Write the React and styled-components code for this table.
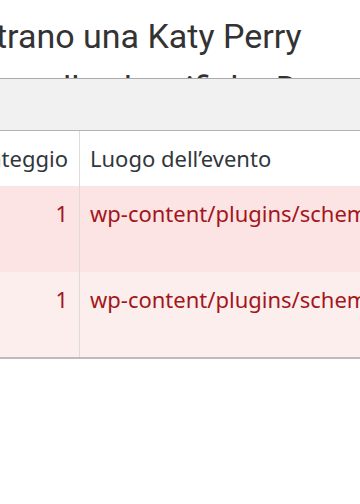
import React from "react";
import styled, { createGlobalStyle } from "styled-components";

// Horizontal scroll position of the page inside the window.
const SCROLL_X = 154;
const FIRST_COL = SCROLL_X + 80;

const GlobalStyle = createGlobalStyle`
  html, body {
    margin: 0;
    padding: 0;
    background: #ffffff;
    overflow: hidden;
  }
`;

const Viewport = styled.div`
  width: 360px;
  height: 504px;
  overflow: hidden;
  background: #ffffff;
`;

const Sheet = styled.div`
  width: 900px;
  margin-left: ${(p) => -p.$scroll}px;
  display: flex;
  flex-direction: column;
`;

const Title = styled.h1`
  margin: 0;
  padding-top: 9.5px;
  height: 68.5px;
  overflow: hidden;
  font-family: Roboto, "Noto Sans", sans-serif;
  font-weight: 400;
  font-size: 34px;
  line-height: 52px;
  color: #333333;
`;

const TitleLine = styled.span`
  display: block;
  white-space: nowrap;
`;

const Toolbar = styled.div`
  height: 51px;
  background: #f1f1f1;
  border-top: 1px solid #ababab;
  border-bottom: 1px solid #b3b3b3;
`;

const Table = styled.div`
  display: flex;
  flex-direction: column;
  border-bottom: 2px solid #bcbcbc;
  font-family: "Noto Sans", "Open Sans", sans-serif;
  font-size: 22px;
  line-height: 30px;
`;

const Row = styled.div`
  display: grid;
  grid-template-columns: ${FIRST_COL}px 1fr;
  height: ${(p) => p.$height}px;
  background: ${(p) => p.$bg};
  color: ${(p) => p.$color};
`;

const Cell = styled.div`
  display: flex;
  justify-content: ${(p) => (p.$numeric ? "flex-end" : "flex-start")};
  align-items: flex-start;
  padding: 12px ${(p) => (p.$numeric ? "11px" : "10px")} 0;
  white-space: nowrap;
  overflow: hidden;
  border-right: ${(p) => (p.$numeric ? "1px solid #dcdcdc" : "none")};
`;

const rows = [
  { score: 1, place: "wp-content/plugins/schema-and-structured-data-for-wp/output/function.php", bg: "#fde4e4", height: 86 },
  { score: 1, place: "wp-content/plugins/schema-and-structured-data-for-wp/admin_section/common-function.php", bg: "#fdeeee", height: 85 },
];

export default function App() {
  return (
    <Viewport>
      <GlobalStyle />
      <Sheet $scroll={SCROLL_X}>
        <Title>
          <TitleLine>I dati mostrano una Katy Perry</TitleLine>
          <TitleLine>ancora viva nelle classifiche Deezer</TitleLine>
        </Title>
        <Toolbar />
        <Table>
          <Row $height={55} $bg="#ffffff" $color="#32373c">
            <Cell $numeric>Punteggio</Cell>
            <Cell>Luogo dell’evento</Cell>
          </Row>
          {rows.map((r, i) => (
            <Row key={i} $height={r.height} $bg={r.bg} $color="#a3161b">
              <Cell $numeric>{r.score}</Cell>
              <Cell>{r.place}</Cell>
            </Row>
          ))}
        </Table>
      </Sheet>
    </Viewport>
  );
}
